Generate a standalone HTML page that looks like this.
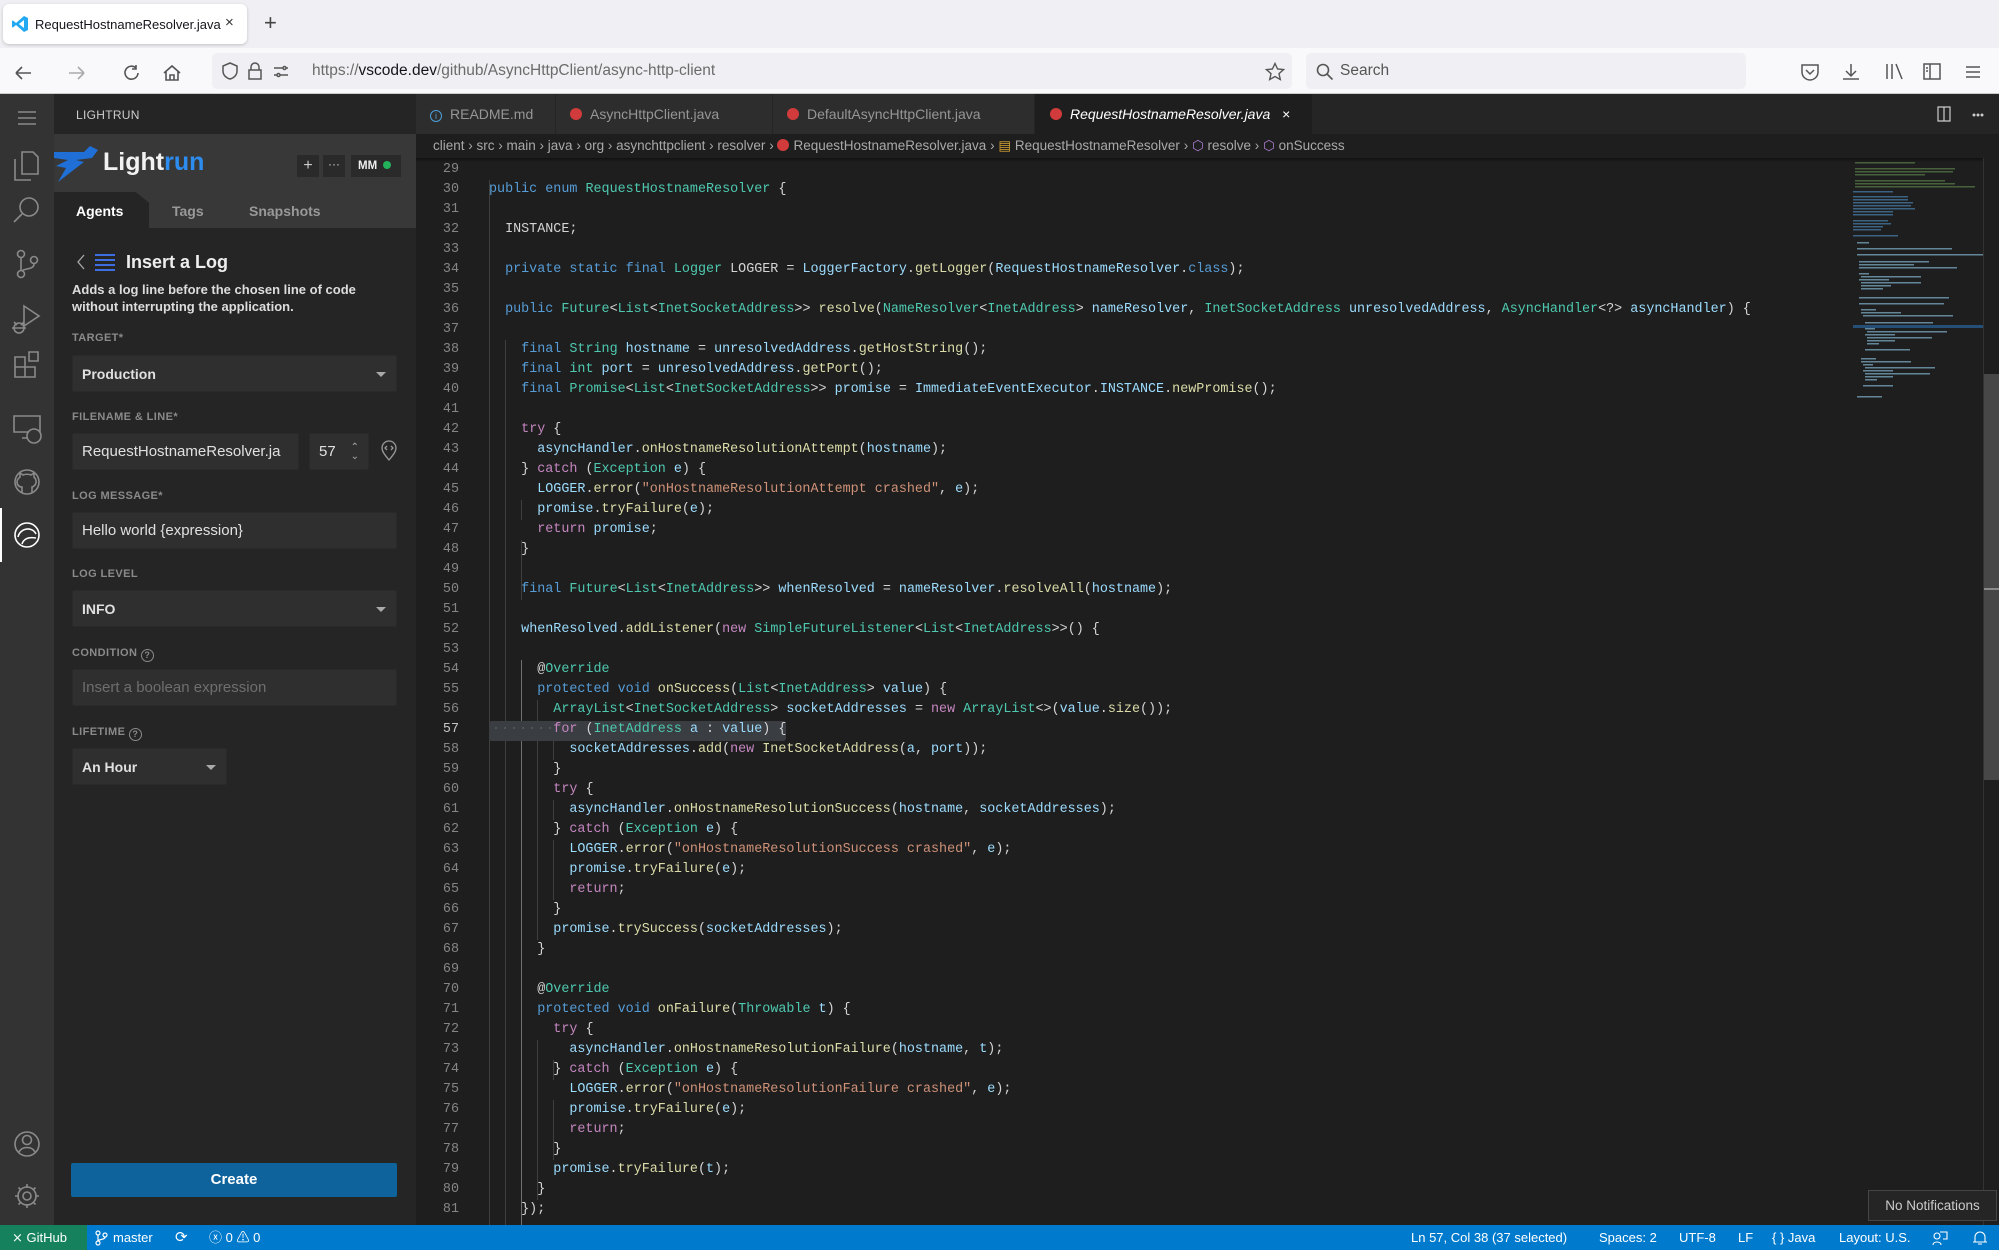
<!DOCTYPE html>
<html style="overflow:hidden"><head><meta charset="utf-8"><style>
*{box-sizing:border-box;margin:0;padding:0}
html,body{width:1999px;height:1250px;overflow:hidden}
body{background:#1e1e1e;font-family:"Liberation Sans",sans-serif;position:relative}
.abs{position:absolute}
.code{position:absolute;left:489px;top:160px;font-family:"Liberation Mono",monospace;font-size:13.4px;color:#d4d4d4}
.code div{height:20px;line-height:20px;white-space:pre}
.ln{position:absolute;left:420px;width:39px;top:160px;font-family:"Liberation Mono",monospace;font-size:13.4px;color:#858585;text-align:right}
.ln div{height:20px;line-height:20px}
.k{color:#569cd6}.c{color:#c586c0}.t{color:#4ec9b0}.v{color:#9cdcfe}.f{color:#dcdcaa}.s{color:#ce9178}
.g{position:absolute;width:1px;background:#404040}
.lbl{position:absolute;left:72px;font-size:11px;font-weight:bold;color:#8a8a8a;letter-spacing:.4px}
.inp{position:absolute;background:#2f2f2f;border:1px solid #2a2a2a;border-radius:2px;color:#e0e0e0;font-size:15px;padding-left:9px;display:flex;align-items:center}
.caret{position:absolute;right:10px;top:16px;width:0;height:0;border-left:5px solid transparent;border-right:5px solid transparent;border-top:5px solid #aaa}
.sb{position:absolute;top:1225px;height:25px;line-height:25px;color:#fff;font-size:13px}
.bc{position:absolute;top:134px;height:24px;line-height:24px;font-size:13.5px;color:#a9a9a9;white-space:nowrap}
.tab{position:absolute;top:94px;height:40px;line-height:40px;font-size:14px;color:#969696;background:#2d2d2d;border-right:1px solid #252526;white-space:nowrap}
.jic{display:inline-block;width:12px;height:12px;border-radius:50%;background:#d13b3b;vertical-align:-1px;margin-right:8px}
</style></head><body>

<!-- Browser chrome -->
<div class="abs" style="left:0;top:0;width:1999px;height:48px;background:#f0f0f4"></div>
<div class="abs" style="left:3px;top:4px;width:244px;height:40px;background:#fff;border-radius:6px;box-shadow:0 1px 3px rgba(0,0,0,.2)"></div>
<svg class="abs" style="left:11px;top:15px" width="18" height="18" viewBox="0 0 18 18"><path d="M13 1 L17 3 V15 L13 17 L5 10 L2 12.5 L1 12 V6 L2 5.5 L5 8 Z M13 5 L8 9 L13 13 Z" fill="#23a9f2"/></svg>
<div class="abs" style="left:35px;top:17px;font-size:13px;color:#15141a">RequestHostnameResolver.java</div>
<div class="abs" style="left:225px;top:14px;font-size:15px;color:#333">×</div>
<div class="abs" style="left:264px;top:10px;font-size:22px;color:#444;font-weight:300">+</div>
<div class="abs" style="left:0;top:48px;width:1999px;height:46px;background:#f9f9fb;border-bottom:1px solid #ccc"></div>
<svg class="abs" style="left:14px;top:63px" width="200" height="20" viewBox="0 0 200 20" fill="none" stroke="#555" stroke-width="1.6"><path d="M2 10H17M2 10L8 4M2 10L8 16"/><path d="M55 10H70M70 10L64 4M70 10L64 16" stroke="#aaa"/><path d="M122 5A6.5 6.5 0 1 0 124 10M122 2V6H118"/><path d="M150 10L158 3L166 10M152 8V17H164V8M156 17V12H160V17"/></svg>
<div class="abs" style="left:212px;top:53px;width:1080px;height:36px;background:#f0f0f4;border-radius:5px"></div>
<svg class="abs" style="left:220px;top:61px" width="80" height="20" viewBox="0 0 80 20" fill="none" stroke="#555" stroke-width="1.5"><path d="M10 2L17 5V10C17 14 14 17 10 18C6 17 3 14 3 10V5Z"/><path d="M31 9V6A4 4 0 0 1 39 6V9M29 9H41V18H29Z"/><path d="M54 7H63M66 7H68M54 14H57M60 14H68"/><circle cx="64.5" cy="7" r="1.5"/><circle cx="58.5" cy="14" r="1.5"/></svg>
<div class="abs" style="left:312px;top:62px;font-size:15.5px;color:#6b6b6b">https://<span style="color:#15141a">vscode.dev</span>/github/AsyncHttpClient/async-http-client</div>
<svg class="abs" style="left:1265px;top:62px" width="20" height="20" viewBox="0 0 20 20" fill="none" stroke="#555" stroke-width="1.4"><path d="M10 1.5L12.6 7L18.5 7.6L14 11.6L15.3 17.5L10 14.5L4.7 17.5L6 11.6L1.5 7.6L7.4 7Z"/></svg>
<div class="abs" style="left:1306px;top:53px;width:440px;height:36px;background:#f0f0f4;border-radius:5px"></div>
<svg class="abs" style="left:1316px;top:63px" width="18" height="18" viewBox="0 0 18 18" fill="none" stroke="#555" stroke-width="1.6"><circle cx="7" cy="7" r="5.5"/><path d="M11 11L16.5 16.5"/></svg>
<div class="abs" style="left:1340px;top:62px;font-size:15.5px;color:#555">Search</div>
<svg class="abs" style="left:1800px;top:61px" width="190" height="22" viewBox="0 0 190 22" fill="none" stroke="#555" stroke-width="1.5"><path d="M2 4H18V11A8 8 0 0 1 2 11Z M6 9L10 13L14 9"/><path d="M51 3V14M46 10L51 15L56 10M43 18H59"/><path d="M87 3V18M92 3V18M96 3L102 18"/><path d="M124 3H140V18H124ZM130 3V18M126 7H128M126 10H128"/><path d="M166 6H180M166 11H180M166 16H180"/></svg>

<!-- Activity bar -->
<div class="abs" style="left:0;top:94px;width:54px;height:1131px;background:#333"></div>
<div class="abs" style="left:0;top:508px;width:2px;height:54px;background:#fff"></div>
<svg class="abs" style="left:0;top:94px" width="54" height="1131" viewBox="0 0 54 1131" fill="none" stroke="#8a8a8a" stroke-width="1.6">
<path d="M18 18H36M18 24H36M18 30H36"/>
<path d="M22 58H33L38 63V80H22Z M15 65V86H31"/>
<circle cx="29" cy="113" r="9"/><path d="M22 120L14 128"/>
<circle cx="21" cy="160" r="3.5"/><circle cx="21" cy="180" r="3.5"/><circle cx="34" cy="166" r="3.5"/><path d="M21 164V176M34 170C34 176 24 174 22 177"/>
<path d="M24 212L39 222L24 232Z"/><circle cx="19" cy="234" r="5"/><path d="M12 234H26M14 228L17 231M24 228L21 231"/>
<path d="M15 273H25V283H15ZM25 273H35V283H25ZM15 263H25V273H15ZM29 258H38V267H29Z"/>
<path d="M14 322V338H40V322ZM22 344H32"/><circle cx="34" cy="342" r="7" fill="#333"/>
<circle cx="27" cy="388" r="12"/><path d="M22 399V393C19 393 17 391 17 388C17 385 19 384 20 383L20 379L23 381C25 380 29 380 31 381L34 379L34 383C36 385 37 388 35 391C33 393 32 393 32 393V399" />
<circle cx="27" cy="441" r="12" stroke="#fff"/><path d="M18 443C20 434 32 432 36 440M22 450C24 444 30 443 36 444" stroke="#fff"/>
<circle cx="27" cy="1050" r="12"/><circle cx="27" cy="1046" r="4.5"/><path d="M19 1058C22 1052 32 1052 35 1058"/>
<circle cx="27" cy="1102" r="4"/><path d="M27 1090V1094M27 1110V1114M15 1102H19M35 1102H39M18.5 1093.5L21 1096M33 1108L35.5 1110.5M18.5 1110.5L21 1108M33 1096L35.5 1093.5"/><circle cx="27" cy="1102" r="9"/>
</svg>

<!-- Sidebar -->
<div class="abs" style="left:54px;top:94px;width:362px;height:1131px;background:#252526"></div>
<div class="abs" style="left:76px;top:108px;font-size:12px;color:#ccc;letter-spacing:.3px">LIGHTRUN</div>
<div class="abs" style="left:54px;top:134px;width:362px;height:94px;background:#383838"></div>
<svg class="abs" style="left:54px;top:146px" width="46" height="40" viewBox="0 0 46 40"><path d="M0 6L30 6L36 0L44 4L38 12L22 14L30 16L4 36L12 22L2 20L14 14L0 12Z" fill="#1f6fd6"/></svg>
<div class="abs" style="left:103px;top:148px;font-size:25px;font-weight:bold;color:#f2f2f2">Light<span style="color:#2d8cf0">run</span></div>
<div class="abs" style="left:297px;top:155px;width:22px;height:22px;background:#2a2a2a;color:#ccc;text-align:center;line-height:22px;font-size:16px">+</div>
<div class="abs" style="left:323px;top:155px;width:22px;height:22px;background:#2a2a2a;color:#ccc;text-align:center;line-height:18px;font-size:12px">···</div>
<div class="abs" style="left:351px;top:155px;width:50px;height:22px;background:#2a2a2a;color:#eee;font-size:11.5px;font-weight:bold;line-height:22px;padding-left:7px">MM<span style="display:inline-block;width:8px;height:8px;border-radius:50%;background:#23b15a;margin-left:6px"></span></div>
<div class="abs" style="left:54px;top:192px;width:95px;height:36px;background:#252526;clip-path:polygon(0 0,86% 0,100% 30%,100% 100%,0 100%)"></div>
<div class="abs" style="left:76px;top:203px;font-size:14px;font-weight:bold;color:#fff">Agents</div>
<div class="abs" style="left:172px;top:203px;font-size:14px;font-weight:bold;color:#999">Tags</div>
<div class="abs" style="left:249px;top:203px;font-size:14px;font-weight:bold;color:#999">Snapshots</div>
<svg class="abs" style="left:74px;top:252px" width="46" height="22" viewBox="0 0 46 22" fill="none" stroke-width="2"><path d="M10 3L4 10L10 17" stroke="#aaa" stroke-width="1.3"/><path d="M21 3H41M21 8H41M21 13H41M21 18H41" stroke="#3d6fe0"/></svg>
<div class="abs" style="left:126px;top:252px;font-size:18px;font-weight:bold;color:#eee">Insert a Log</div>
<div class="abs" style="left:72px;top:281px;font-size:13px;font-weight:bold;color:#ddd;line-height:17px">Adds a log line before the chosen line of code<br>without interrupting the application.</div>

<div class="lbl" style="top:332px">TARGET*</div>
<div class="inp" style="left:72px;top:355px;width:325px;height:37px;font-weight:bold;font-size:14px">Production<div class="caret"></div></div>
<div class="lbl" style="top:411px">FILENAME &amp; LINE*</div>
<div class="inp" style="left:72px;top:433px;width:227px;height:37px;overflow:hidden;white-space:nowrap">RequestHostnameResolver.ja</div>
<div class="inp" style="left:309px;top:433px;width:60px;height:37px">57<span style="position:absolute;right:9px;top:9px;font-size:10px;color:#aaa;line-height:9px">⌃<br>⌄</span></div>
<svg class="abs" style="left:380px;top:440px" width="18" height="22" viewBox="0 0 18 22" fill="none" stroke="#999" stroke-width="1.3"><path d="M9 20C4 14 2 11 2 8A7 7 0 0 1 16 8C16 11 14 14 9 20Z"/><path d="M7 6L5 8L7 10M11 6L13 8L11 10"/></svg>
<div class="lbl" style="top:490px">LOG MESSAGE*</div>
<div class="inp" style="left:72px;top:512px;width:325px;height:37px">Hello world {expression}</div>
<div class="lbl" style="top:568px">LOG LEVEL</div>
<div class="inp" style="left:72px;top:590px;width:325px;height:37px;font-weight:bold;font-size:14px">INFO<div class="caret"></div></div>
<div class="lbl" style="top:647px">CONDITION <span style="display:inline-block;width:13px;height:13px;border:1.3px solid #8a8a8a;border-radius:50%;font-size:9px;text-align:center;line-height:11px;vertical-align:-2px">?</span></div>
<div class="inp" style="left:72px;top:669px;width:325px;height:37px;color:#6e6e6e">Insert a boolean expression</div>
<div class="lbl" style="top:726px">LIFETIME <span style="display:inline-block;width:13px;height:13px;border:1.3px solid #8a8a8a;border-radius:50%;font-size:9px;text-align:center;line-height:11px;vertical-align:-2px">?</span></div>
<div class="inp" style="left:72px;top:748px;width:155px;height:37px;font-weight:bold;font-size:14px">An Hour<div class="caret"></div></div>
<div class="abs" style="left:71px;top:1163px;width:326px;height:34px;background:#0e639c;border-radius:2px;color:#fff;font-weight:bold;font-size:15px;text-align:center;line-height:34px">Create</div>

<!-- Editor tabs -->
<div class="abs" style="left:416px;top:94px;width:1583px;height:40px;background:#252526"></div>
<div class="tab" style="left:416px;width:140px;padding-left:14px"><span style="display:inline-block;width:12px;height:12px;border:1.3px solid #4e9fd8;border-radius:50%;font-size:9px;color:#4e9fd8;text-align:center;line-height:10px;vertical-align:0;margin-right:8px">i</span>README.md</div>
<div class="tab" style="left:556px;width:217px;padding-left:14px"><span class="jic"></span>AsyncHttpClient.java</div>
<div class="tab" style="left:773px;width:262px;padding-left:14px"><span class="jic"></span>DefaultAsyncHttpClient.java</div>
<div class="tab" style="left:1035px;width:278px;padding-left:15px;background:#1e1e1e;color:#fff;font-style:italic"><span class="jic"></span>RequestHostnameResolver.java <span style="font-style:normal;margin-left:8px">×</span></div>
<svg class="abs" style="left:1936px;top:106px" width="50" height="16" viewBox="0 0 50 16" fill="none" stroke="#ccc" stroke-width="1.2"><path d="M2 1H14V15H2ZM8 1V15"/><circle cx="38" cy="9" r=".9" fill="#ccc"/><circle cx="42" cy="9" r=".9" fill="#ccc"/><circle cx="46" cy="9" r=".9" fill="#ccc"/></svg>

<!-- Breadcrumb -->
<div class="bc" style="left:433px">client <span>›</span> src <span>›</span> main <span>›</span> java <span>›</span> org <span>›</span> asynchttpclient <span>›</span> resolver <span>›</span> <span class="jic" style="margin-right:4px"></span>RequestHostnameResolver.java <span>›</span> <span style="color:#d7a332">▤</span> RequestHostnameResolver <span>›</span> <span style="color:#b180d7">⬡</span> resolve <span>›</span> <span style="color:#b180d7">⬡</span> onSuccess</div>
<div class="abs" style="left:416px;top:158px;width:1567px;height:4px;background:linear-gradient(#111,rgba(0,0,0,0))"></div>

<!-- Indent guides -->
<div class="g" style="left:489px;top:180px;height:1045px"></div>
<div class="g" style="left:505px;top:340px;height:885px"></div>
<div class="g" style="left:521px;top:500px;height:20px"></div>
<div class="g" style="left:521px;top:540px;height:60px"></div>
<div class="g" style="left:521px;top:660px;height:565px;background:#707070"></div>
<div class="g" style="left:537px;top:700px;height:240px"></div>
<div class="g" style="left:537px;top:1040px;height:160px"></div>
<div class="g" style="left:553px;top:740px;height:20px"></div>
<div class="g" style="left:553px;top:800px;height:20px"></div>
<div class="g" style="left:553px;top:840px;height:60px"></div>
<div class="g" style="left:553px;top:1060px;height:20px"></div>
<div class="g" style="left:553px;top:1100px;height:60px"></div>

<!-- Selection line 57 -->
<div class="abs" style="left:489px;top:721px;width:297px;height:20px;background:#3a3d41;border-radius:3px"></div>
<div class="abs" style="left:492px;top:722px;font-family:'Liberation Mono',monospace;font-size:13.4px;color:#5a5a5a;letter-spacing:1px">·······</div>

<div class="ln"><div>29</div><div>30</div><div>31</div><div>32</div><div>33</div><div>34</div><div>35</div><div>36</div><div>37</div><div>38</div><div>39</div><div>40</div><div>41</div><div>42</div><div>43</div><div>44</div><div>45</div><div>46</div><div>47</div><div>48</div><div>49</div><div>50</div><div>51</div><div>52</div><div>53</div><div>54</div><div>55</div><div>56</div><div style="color:#c6c6c6">57</div><div>58</div><div>59</div><div>60</div><div>61</div><div>62</div><div>63</div><div>64</div><div>65</div><div>66</div><div>67</div><div>68</div><div>69</div><div>70</div><div>71</div><div>72</div><div>73</div><div>74</div><div>75</div><div>76</div><div>77</div><div>78</div><div>79</div><div>80</div><div>81</div></div>

<div class="code">
<div> </div>
<div><span class="k">public</span> <span class="k">enum</span> <span class="t">RequestHostnameResolver</span> {</div>
<div> </div>
<div>  INSTANCE;</div>
<div> </div>
<div>  <span class="k">private</span> <span class="k">static</span> <span class="k">final</span> <span class="t">Logger</span> LOGGER = <span class="v">LoggerFactory</span>.<span class="f">getLogger</span>(<span class="v">RequestHostnameResolver</span>.<span class="k">class</span>);</div>
<div> </div>
<div>  <span class="k">public</span> <span class="t">Future</span>&lt;<span class="t">List</span>&lt;<span class="t">InetSocketAddress</span>&gt;&gt; <span class="f">resolve</span>(<span class="t">NameResolver</span>&lt;<span class="t">InetAddress</span>&gt; <span class="v">nameResolver</span>, <span class="t">InetSocketAddress</span> <span class="v">unresolvedAddress</span>, <span class="t">AsyncHandler</span>&lt;?&gt; <span class="v">asyncHandler</span>) {</div>
<div> </div>
<div>    <span class="k">final</span> <span class="t">String</span> <span class="v">hostname</span> = <span class="v">unresolvedAddress</span>.<span class="f">getHostString</span>();</div>
<div>    <span class="k">final</span> <span class="t">int</span> <span class="v">port</span> = <span class="v">unresolvedAddress</span>.<span class="f">getPort</span>();</div>
<div>    <span class="k">final</span> <span class="t">Promise</span>&lt;<span class="t">List</span>&lt;<span class="t">InetSocketAddress</span>&gt;&gt; <span class="v">promise</span> = <span class="v">ImmediateEventExecutor</span>.<span class="v">INSTANCE</span>.<span class="f">newPromise</span>();</div>
<div> </div>
<div>    <span class="c">try</span> {</div>
<div>      <span class="v">asyncHandler</span>.<span class="f">onHostnameResolutionAttempt</span>(<span class="v">hostname</span>);</div>
<div>    } <span class="c">catch</span> (<span class="t">Exception</span> <span class="v">e</span>) {</div>
<div>      <span class="v">LOGGER</span>.<span class="f">error</span>(<span class="s">"onHostnameResolutionAttempt crashed"</span>, <span class="v">e</span>);</div>
<div>      <span class="v">promise</span>.<span class="f">tryFailure</span>(<span class="v">e</span>);</div>
<div>      <span class="c">return</span> <span class="v">promise</span>;</div>
<div>    }</div>
<div> </div>
<div>    <span class="k">final</span> <span class="t">Future</span>&lt;<span class="t">List</span>&lt;<span class="t">InetAddress</span>&gt;&gt; <span class="v">whenResolved</span> = <span class="v">nameResolver</span>.<span class="f">resolveAll</span>(<span class="v">hostname</span>);</div>
<div> </div>
<div>    <span class="v">whenResolved</span>.<span class="f">addListener</span>(<span class="c">new</span> <span class="t">SimpleFutureListener</span>&lt;<span class="t">List</span>&lt;<span class="t">InetAddress</span>&gt;&gt;() {</div>
<div> </div>
<div>      @<span class="t">Override</span></div>
<div>      <span class="k">protected</span> <span class="k">void</span> <span class="f">onSuccess</span>(<span class="t">List</span>&lt;<span class="t">InetAddress</span>&gt; <span class="v">value</span>) {</div>
<div>        <span class="t">ArrayList</span>&lt;<span class="t">InetSocketAddress</span>&gt; <span class="v">socketAddresses</span> = <span class="c">new</span> <span class="t">ArrayList</span>&lt;&gt;(<span class="v">value</span>.<span class="f">size</span>());</div>
<div>        <span class="c">for</span> (<span class="t">InetAddress</span> <span class="v">a</span> : <span class="v">value</span>) {</div>
<div>          <span class="v">socketAddresses</span>.<span class="f">add</span>(<span class="c">new</span> <span class="f">InetSocketAddress</span>(<span class="v">a</span>, <span class="v">port</span>));</div>
<div>        }</div>
<div>        <span class="c">try</span> {</div>
<div>          <span class="v">asyncHandler</span>.<span class="f">onHostnameResolutionSuccess</span>(<span class="v">hostname</span>, <span class="v">socketAddresses</span>);</div>
<div>        } <span class="c">catch</span> (<span class="t">Exception</span> <span class="v">e</span>) {</div>
<div>          <span class="v">LOGGER</span>.<span class="f">error</span>(<span class="s">"onHostnameResolutionSuccess crashed"</span>, <span class="v">e</span>);</div>
<div>          <span class="v">promise</span>.<span class="f">tryFailure</span>(<span class="v">e</span>);</div>
<div>          <span class="c">return</span>;</div>
<div>        }</div>
<div>        <span class="v">promise</span>.<span class="f">trySuccess</span>(<span class="v">socketAddresses</span>);</div>
<div>      }</div>
<div> </div>
<div>      @<span class="t">Override</span></div>
<div>      <span class="k">protected</span> <span class="k">void</span> <span class="f">onFailure</span>(<span class="t">Throwable</span> <span class="v">t</span>) {</div>
<div>        <span class="c">try</span> {</div>
<div>          <span class="v">asyncHandler</span>.<span class="f">onHostnameResolutionFailure</span>(<span class="v">hostname</span>, <span class="v">t</span>);</div>
<div>        } <span class="c">catch</span> (<span class="t">Exception</span> <span class="v">e</span>) {</div>
<div>          <span class="v">LOGGER</span>.<span class="f">error</span>(<span class="s">"onHostnameResolutionFailure crashed"</span>, <span class="v">e</span>);</div>
<div>          <span class="v">promise</span>.<span class="f">tryFailure</span>(<span class="v">e</span>);</div>
<div>          <span class="c">return</span>;</div>
<div>        }</div>
<div>        <span class="v">promise</span>.<span class="f">tryFailure</span>(<span class="v">t</span>);</div>
<div>      }</div>
<div>    });</div>
</div>

<!-- Minimap -->
<svg class="abs" style="left:1853px;top:158px" width="130" height="320" viewBox="0 0 130 320" opacity=".55">
<g fill="#6a9955"><rect x="2" y="4" width="60" height="1.5"/><rect x="2" y="10" width="100" height="1.5"/><rect x="2" y="13" width="98" height="1.5"/><rect x="2" y="16" width="70" height="1.5"/><rect x="2" y="22" width="90" height="1.5"/><rect x="2" y="25" width="100" height="1.5"/><rect x="2" y="28" width="120" height="1.5"/></g>
<g fill="#569cd6"><rect x="0" y="33" width="40" height="1.5"/><rect x="0" y="38" width="55" height="1.5"/><rect x="0" y="41" width="55" height="1.5"/><rect x="0" y="44" width="60" height="1.5"/><rect x="0" y="47" width="58" height="1.5"/><rect x="0" y="50" width="62" height="1.5"/><rect x="0" y="53" width="40" height="1.5"/><rect x="0" y="56" width="40" height="1.5"/><rect x="0" y="62" width="35" height="1.5"/><rect x="0" y="65" width="38" height="1.5"/><rect x="0" y="68" width="30" height="1.5"/><rect x="0" y="71" width="28" height="1.5"/><rect x="0" y="77" width="45" height="1.5"/></g>
<g fill="#9cdcfe"><rect x="4" y="84" width="12" height="1.5"/><rect x="4" y="90" width="95" height="1.5"/><rect x="4" y="96" width="128" height="1.5"/><rect x="6" y="103" width="70" height="1.5"/><rect x="6" y="106" width="55" height="1.5"/><rect x="6" y="109" width="98" height="1.5"/><rect x="6" y="115" width="10" height="1.5"/><rect x="8" y="118" width="60" height="1.5"/><rect x="6" y="121" width="30" height="1.5"/><rect x="8" y="124" width="60" height="1.5"/><rect x="8" y="127" width="30" height="1.5"/><rect x="8" y="130" width="22" height="1.5"/><rect x="6" y="139" width="90" height="1.5"/><rect x="6" y="145" width="85" height="1.5"/><rect x="8" y="151" width="15" height="1.5"/><rect x="8" y="154" width="40" height="1.5"/><rect x="10" y="157" width="90" height="1.5"/><rect x="12" y="164" width="68" height="1.5"/><rect x="12" y="170" width="10" height="1.5"/><rect x="14" y="173" width="80" height="1.5"/><rect x="12" y="176" width="30" height="1.5"/><rect x="14" y="179" width="65" height="1.5"/><rect x="14" y="182" width="28" height="1.5"/><rect x="14" y="185" width="12" height="1.5"/><rect x="12" y="191" width="45" height="1.5"/><rect x="8" y="200" width="15" height="1.5"/><rect x="8" y="203" width="50" height="1.5"/><rect x="10" y="206" width="10" height="1.5"/><rect x="12" y="209" width="70" height="1.5"/><rect x="10" y="212" width="30" height="1.5"/><rect x="12" y="215" width="65" height="1.5"/><rect x="12" y="218" width="28" height="1.5"/><rect x="12" y="221" width="12" height="1.5"/><rect x="10" y="227" width="30" height="1.5"/><rect x="4" y="238" width="25" height="1.5"/></g>
</svg>
<div class="abs" style="left:1853px;top:325px;width:130px;height:3px;background:#264f78"></div>
<div class="abs" style="left:1983px;top:158px;width:1px;height:1067px;background:#333"></div>
<div class="abs" style="left:1984px;top:374px;width:15px;height:406px;background:#474747"></div>
<div class="abs" style="left:1984px;top:588px;width:15px;height:2px;background:#8a8a8a"></div>

<!-- Notification tooltip -->
<div class="abs" style="left:1868px;top:1190px;width:129px;height:31px;background:#252526;border:1px solid #454545;color:#ccc;font-size:13.5px;line-height:29px;text-align:center">No Notifications</div>

<!-- Status bar -->
<div class="abs" style="left:0;top:1225px;width:1999px;height:25px;background:#007acc"></div>
<div class="abs" style="left:0;top:1225px;width:87px;height:25px;background:#16825d"></div>
<div class="sb" style="left:12px">⨯ GitHub</div>
<svg class="abs" style="left:94px;top:1230px" width="14" height="16" viewBox="0 0 14 16" fill="none" stroke="#fff" stroke-width="1.2"><circle cx="4" cy="3" r="2"/><circle cx="4" cy="13" r="2"/><circle cx="11" cy="5" r="2"/><path d="M4 5V11M11 7C11 10 5 9 4 11"/></svg>
<div class="sb" style="left:113px">master</div>
<div class="sb" style="left:175px;font-size:15px">⟳</div>
<div class="sb" style="left:209px">ⓧ 0 ⚠ 0</div>
<div class="sb" style="left:1411px">Ln 57, Col 38 (37 selected)</div>
<div class="sb" style="left:1599px">Spaces: 2</div>
<div class="sb" style="left:1679px">UTF-8</div>
<div class="sb" style="left:1738px">LF</div>
<div class="sb" style="left:1772px">{ } Java</div>
<div class="sb" style="left:1839px">Layout: U.S.</div>
<svg class="abs" style="left:1932px;top:1230px" width="60" height="16" viewBox="0 0 60 16" fill="none" stroke="#fff" stroke-width="1.1"><circle cx="5" cy="6" r="3"/><path d="M1 15C1 11 9 11 9 15M8 2H15V9H11"/><path d="M43 12V7A5 5 0 0 1 53 7V12H55H41M46 14H50"/></svg>
</body></html>
